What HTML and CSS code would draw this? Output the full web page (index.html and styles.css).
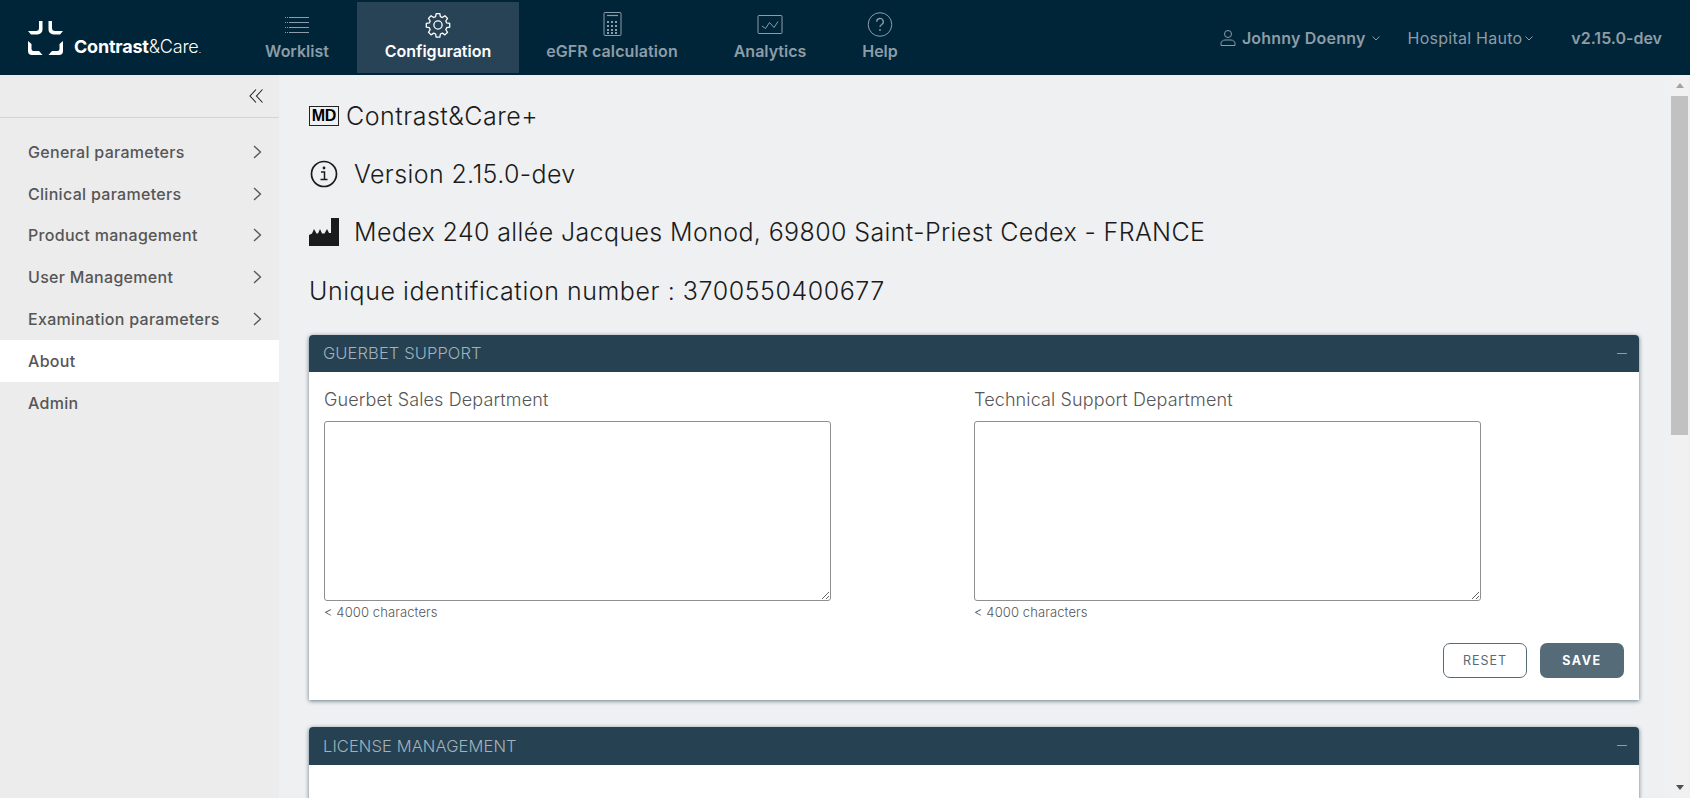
FILE: index.html
```html
<!DOCTYPE html>
<html lang="en">
<head>
    <meta charset="UTF-8">
    <title>Contrast&amp;Care - About</title>
    <link rel="stylesheet" href="styles.css">
</head>
<body>
    <header class="topbar">
        <div class="logo">
            <svg class="logo-mark" width="35" height="34" viewBox="0 0 35 34" fill="#fff">
                <path d="M11 0h3.500v8.500a5 5 0 0 1-5 5H3L0 10h8a3 3 0 0 0 3-3z"/>
                <path d="M11 0h3.500v8.500a5 5 0 0 1-5 5H3L0 10h8a3 3 0 0 0 3-3z" transform="matrix(-1 0 0 1 35 0)"/>
                <path d="M0 20l3.500 3v5a2 2 0 0 0 2 2H11l3.500 4H4a4 4 0 0 1-4-4z"/>
                <path d="M0 20l3.500 3v5a2 2 0 0 0 2 2H11l3.500 4H4a4 4 0 0 1-4-4z" transform="matrix(-1 0 0 1 35 0)"/>
            </svg>
            <span class="logo-text"><b>Contrast</b>&amp;Care<small>.</small></span>
        </div>
        <nav class="mainnav">
            <a class="navitem nav-worklist">
                <svg width="24" height="24" viewBox="0 0 24 24" fill="none" stroke="currentColor"><path d="M4 5.500h20M4 10.500h20M4 15.500h20M4 20.500h20"/><path d="M0 5.500h3M0 10.500h3M0 15.500h3M0 20.500h3" stroke-dasharray="1 1"/></svg>
                <span>Worklist</span>
            </a>
            <a class="navitem nav-config active">
                <svg width="26" height="26" viewBox="0 0 24 24" fill="none" stroke="currentColor" stroke-width="1.200" stroke-linejoin="round"><circle cx="12" cy="12" r="3.800"/><path d="M10.300 1.500h3.400l.5 2.800 1.800.8 2.400-1.600 2.400 2.400-1.600 2.400.8 1.800 2.800.5v3.400l-2.800.5-.8 1.800 1.600 2.400-2.400 2.400-2.400-1.600-1.800.8-.5 2.800h-3.400l-.5-2.800-1.800-.8-2.400 1.600-2.400-2.400 1.600-2.400-.8-1.800-2.800-.5v-3.400l2.800-.5.8-1.800-1.600-2.400 2.400-2.400 2.400 1.600 1.800-.8z"/></svg>
                <span>Configuration</span>
            </a>
            <a class="navitem nav-egfr">
                <svg width="19" height="24" viewBox="0 0 19 24" fill="none" stroke="currentColor"><rect x="1" y=".5" width="17" height="23" rx="1"/><path d="M4 3.500h11" stroke-width="1.200"/><path d="M4 10h11M4 14h11M4 18h11M4 21h11" stroke-width="2" stroke-dasharray="2 2"/></svg>
                <span>eGFR calculation</span>
            </a>
            <a class="navitem nav-analytics">
                <svg width="26" height="24" viewBox="0 0 26 24" fill="none" stroke="currentColor"><rect x="1" y="3.500" width="24" height="18" rx="1"/><path d="M5 14l3.500 2.500 4-6 4.500 5 4-6"/></svg>
                <span>Analytics</span>
            </a>
            <a class="navitem nav-help">
                <svg width="26" height="25" viewBox="0 0 26 25" fill="none" stroke="currentColor"><circle cx="13" cy="12.500" r="11.800"/><path d="M9.700 9.700a3.300 3.300 0 1 1 4.800 3c-1 .6-1.500 1.200-1.500 2.300" stroke-width="1.300"/><circle cx="13" cy="18" r=".9" fill="currentColor" stroke="none"/></svg>
                <span>Help</span>
            </a>
        </nav>
        <div class="usermenu">
            <span class="usermenu-item user-name">
                <svg width="16" height="18" viewBox="0 0 16 18" fill="none" stroke="currentColor"><circle cx="8" cy="5" r="3.500"/><path d="M1 16.500v-2c0-2 2-3.500 4-3.500h6c2 0 4 1.500 4 3.500v2z"/></svg>
                <span class="user-label">Johnny Doenny</span>
                <svg class="caret" width="8" height="5" viewBox="0 0 8 5" fill="none" stroke="currentColor"><path d="M.5.500L4 4 7.500.500"/></svg>
            </span>
            <span class="usermenu-item hospital">
                Hospital Hauto
                <svg class="caret" width="8" height="5" viewBox="0 0 8 5" fill="none" stroke="currentColor"><path d="M.5.500L4 4 7.500.500"/></svg>
            </span>
            <span class="usermenu-item version">v2.15.0-dev</span>
        </div>
    </header>

    <div class="layout">
        <aside class="sidebar">
            <div class="collapse">
                <svg width="15" height="14" viewBox="0 0 15 14" fill="none" stroke="#222" stroke-width="1.100"><path d="M7 .5L1 7l6 6.500M13.500 .5l-6 6.500 6 6.500"/></svg>
            </div>
            <ul class="sidemenu">
                <li>General parameters <svg class="chev" width="9" height="14" viewBox="0 0 9 14" fill="none" stroke="#555" stroke-width="1.300"><path d="M1 1l6.500 6L1 13"/></svg></li>
                <li>Clinical parameters <svg class="chev" width="9" height="14" viewBox="0 0 9 14" fill="none" stroke="#555" stroke-width="1.300"><path d="M1 1l6.500 6L1 13"/></svg></li>
                <li>Product management <svg class="chev" width="9" height="14" viewBox="0 0 9 14" fill="none" stroke="#555" stroke-width="1.300"><path d="M1 1l6.500 6L1 13"/></svg></li>
                <li>User Management <svg class="chev" width="9" height="14" viewBox="0 0 9 14" fill="none" stroke="#555" stroke-width="1.300"><path d="M1 1l6.500 6L1 13"/></svg></li>
                <li>Examination parameters <svg class="chev" width="9" height="14" viewBox="0 0 9 14" fill="none" stroke="#555" stroke-width="1.300"><path d="M1 1l6.500 6L1 13"/></svg></li>
                <li class="selected">About</li>
                <li>Admin</li>
            </ul>
        </aside>

        <main class="content">
            <div class="inforow row-product">
                <span class="md-badge">MD</span>
                <span>Contrast&amp;Care+</span>
            </div>
            <div class="inforow row-version">
                <svg class="row-icon" width="30" height="30" viewBox="0 0 30 30" fill="none" stroke="#1b1b1b" stroke-width="1.700"><circle cx="15" cy="15" r="12.500"/><path d="M12 13h3.500v7M11.500 20.500h7" stroke-width="1.500"/><circle cx="15" cy="9" r="1.400" fill="#1b1b1b" stroke="none"/></svg>
                <span>Version 2.15.0-dev</span>
            </div>
            <div class="inforow row-maker">
                <svg class="row-icon" width="30" height="28" viewBox="0 0 30 28" fill="#1b1b1b"><path d="M0 28V17l3-1.500L5 11l2.500 4.500H9L11 11l2 4.500h2.500L18 11l2 4h2V0h8v28z"/></svg>
                <span>Medex 240 allée Jacques Monod, 69800 Saint-Priest Cedex - FRANCE</span>
            </div>
            <div class="inforow row-udi">Unique identification number : 3700550400677</div>

            <section class="card card-support">
                <div class="card-head">GUERBET SUPPORT<i class="minus"></i></div>
                <div class="card-body">
                    <div class="fields">
                        <div class="field">
                            <label>Guerbet Sales Department</label>
                            <textarea></textarea>
                            <small>&lt; 4000 characters</small>
                        </div>
                        <div class="field">
                            <label>Technical Support Department</label>
                            <textarea></textarea>
                            <small>&lt; 4000 characters</small>
                        </div>
                    </div>
                    <div class="actions">
                        <button class="btn btn-outline">RESET</button>
                        <button class="btn btn-solid">SAVE</button>
                    </div>
                </div>
            </section>

            <section class="card card-license">
                <div class="card-head">LICENSE MANAGEMENT<i class="minus"></i></div>
                <div class="card-body license-body">
                    <span>Code</span>
                    <span>Code</span>
                    <span>Validity</span>
                </div>
            </section>
        </main>

        <div class="scrollbar">
            <div class="scroll-btn"><i class="arrow-up"></i></div>
            <div class="scroll-track"><div class="scroll-thumb"></div></div>
            <div class="scroll-btn"><i class="arrow-down"></i></div>
        </div>
    </div>
</body>
</html>
```
FILE: styles.css
```css
* {
    box-sizing: border-box;
}
html, body {
    height: 100%;
}
body {
    margin: 0;
    overflow: hidden;
    font-family: Inter, "Liberation Sans", sans-serif;
    background-color: #eff0f2;
    color: #1b1b1b;
}

/* top bar */
.topbar {
    display: flex;
    height: 75px;
    background-color: #002538;
    color: #8d9ca6;
}
.logo {
    display: flex;
    align-items: flex-start;
    width: 237px;
    padding: 21px 0 0 28px;
    color: #fff;
}
.logo-mark {
    flex: none;
}
.logo-text {
    margin: 13px 0 0 11px;
    font-size: 18px;
    line-height: 26px;
    letter-spacing: -.2px;
    font-weight: 300;
    white-space: nowrap;
}
.logo-text b {
    font-weight: 700;
}
.logo-text small {
    font-size: 10px;
}
.mainnav {
    display: flex;
    padding-top: 2px;
    height: 73px;
}
.navitem {
    display: flex;
    flex-direction: column;
    align-items: center;
    justify-content: space-between;
    padding: 10px 0 12px;
    font-size: 16px;
    font-weight: 600;
}
.navitem svg {
    flex: none;
}
.nav-worklist { width: 120px; }
.nav-config { width: 162px; }
.nav-egfr { width: 186px; letter-spacing: .1px; }
.nav-analytics { width: 130px; }
.nav-help { width: 90px; }
.navitem.active {
    background-color: #274355;
    color: #fff;
}
.usermenu {
    display: flex;
    align-items: center;
    margin-left: auto;
    padding: 0 28px 0 0;
    font-size: 16px;
    font-weight: 600;
    height: 75px;
}
.usermenu-item {
    display: flex;
    align-items: center;
    gap: 5px;
}
.user-name {
    gap: 6px;
    margin-right: 28px;
}
.user-label {
    letter-spacing: .2px;
}
.hospital {
    margin-right: 38px;
    font-weight: 400;
    letter-spacing: .25px;
    gap: 3px;
}
.caret {
    margin-top: 1px;
}

/* page */
.layout {
    display: flex;
    height: calc(100% - 75px);
}
.sidebar {
    flex: none;
    width: 279px;
    background-color: #ececec;
}
.collapse {
    display: flex;
    justify-content: flex-end;
    align-items: center;
    height: 43px;
    padding-right: 15px;
    border-bottom: 1px solid #d4d4d4;
}
.sidemenu {
    margin: 13px 0 0;
    padding: 0;
    list-style: none;
}
.sidemenu li {
    display: flex;
    align-items: center;
    justify-content: space-between;
    height: 41.800px;
    padding: 0 17px 0 28px;
    font-size: 16px;
    letter-spacing: .3px;
    font-weight: 500;
    color: #565656;
}
.sidemenu li.selected {
    background-color: #fff;
}
.chev {
    flex: none;
}

/* main content */
.content {
    flex: 1;
    min-width: 0;
    overflow: hidden;
    padding: 0 32px 0 30px;
}
.inforow {
    display: flex;
    align-items: center;
    font-size: 25px;
    letter-spacing: .38px;
    font-weight: 300;
    white-space: nowrap;
}
.row-product {
    height: 36px;
    margin-top: 23px;
    letter-spacing: .5px;
}
.row-version {
    height: 36px;
    margin-top: 22px;
}
.row-maker {
    height: 36px;
    margin-top: 22px;
}
.row-udi {
    height: 36px;
    margin-top: 23px;
    letter-spacing: .55px;
}
.md-badge {
    width: 30px;
    height: 20px;
    margin-right: 7px;
    border: 1px solid #222;
    font-family: "Liberation Sans", sans-serif;
    font-size: 16px;
    font-weight: 700;
    letter-spacing: -.3px;
    line-height: 18px;
    text-align: center;
    color: #000;
}
.row-icon {
    flex: none;
    margin-right: 15px;
}
.card {
    background-color: #fff;
    border-radius: 4px 4px 0 0;
    box-shadow: 0 1px 4px rgba(30,55,70,.65);
}
.card-support {
    margin-top: 26px;
}
.card-license {
    margin-top: 27px;
}
.card-head {
    display: flex;
    align-items: center;
    justify-content: space-between;
    height: 37px;
    padding: 0 12px 1px 14px;
    background-color: #254152;
    border-radius: 4px 4px 0 0;
    color: #a3b2bb;
    font-size: 16.500px;
    letter-spacing: .1px;
    font-weight: 300;
}
.card-license .card-head {
    height: 38px;
}
.minus {
    width: 10px;
    height: 1px;
    background-color: #8d9ca6;
}
.card-body {
    padding: 17px 15px 22px;
}
.fields {
    display: flex;
    gap: 143px;
}
.field {
    display: flex;
    flex-direction: column;
    align-items: flex-start;
    width: 507px;
}
.field label {
    font-size: 18px;
    letter-spacing: .12px;
    font-weight: 300;
    color: #565656;
    height: 32px;
}
.field textarea {
    width: 507px;
    height: 180px;
    border: 1px solid #8f8f8f;
    border-radius: 3px;
    background-color: #fff;
}
.field small {
    margin-top: 3px;
    font-size: 13px;
    letter-spacing: .1px;
    font-weight: 300;
    color: #565656;
}
.actions {
    display: flex;
    justify-content: flex-end;
    gap: 13px;
    margin-top: 23px;
}
.btn {
    width: 84px;
    height: 35px;
    padding-bottom: 2px;
    border-radius: 7px;
    font-family: inherit;
    font-size: 12.500px;
    letter-spacing: 1px;
}
.btn-outline {
    border: 1px solid #566b78;
    background-color: #fff;
    color: #566b78;
}
.btn-solid {
    border: none;
    background-color: #566b78;
    color: #fff;
    font-weight: 700;
    letter-spacing: 1.500px;
}
.license-body {
    display: flex;
    height: 200px;
    padding: 34px 15px 0;
    font-size: 18px;
    font-weight: 300;
    color: #565656;
}
.license-body span:nth-child(1) { width: 433px; }
.license-body span:nth-child(2) { width: 450px; }

.scrollbar {
    flex: none;
    display: flex;
    flex-direction: column;
    width: 17px;
    margin-right: 2px;
    background-color: #f1f1f1;
}
.scroll-btn {
    display: flex;
    align-items: center;
    justify-content: center;
    height: 21px;
    flex: none;
}
.scroll-track {
    flex: 1;
}
.scroll-thumb {
    height: 339px;
    background-color: #c1c1c1;
}
.arrow-up, .arrow-down {
    width: 0;
    height: 0;
    border-left: 4.500px solid transparent;
    border-right: 4.500px solid transparent;
}
.arrow-up {
    border-bottom: 5px solid #a3a3a3;
}
.arrow-down {
    border-top: 5px solid #505050;
}
```
